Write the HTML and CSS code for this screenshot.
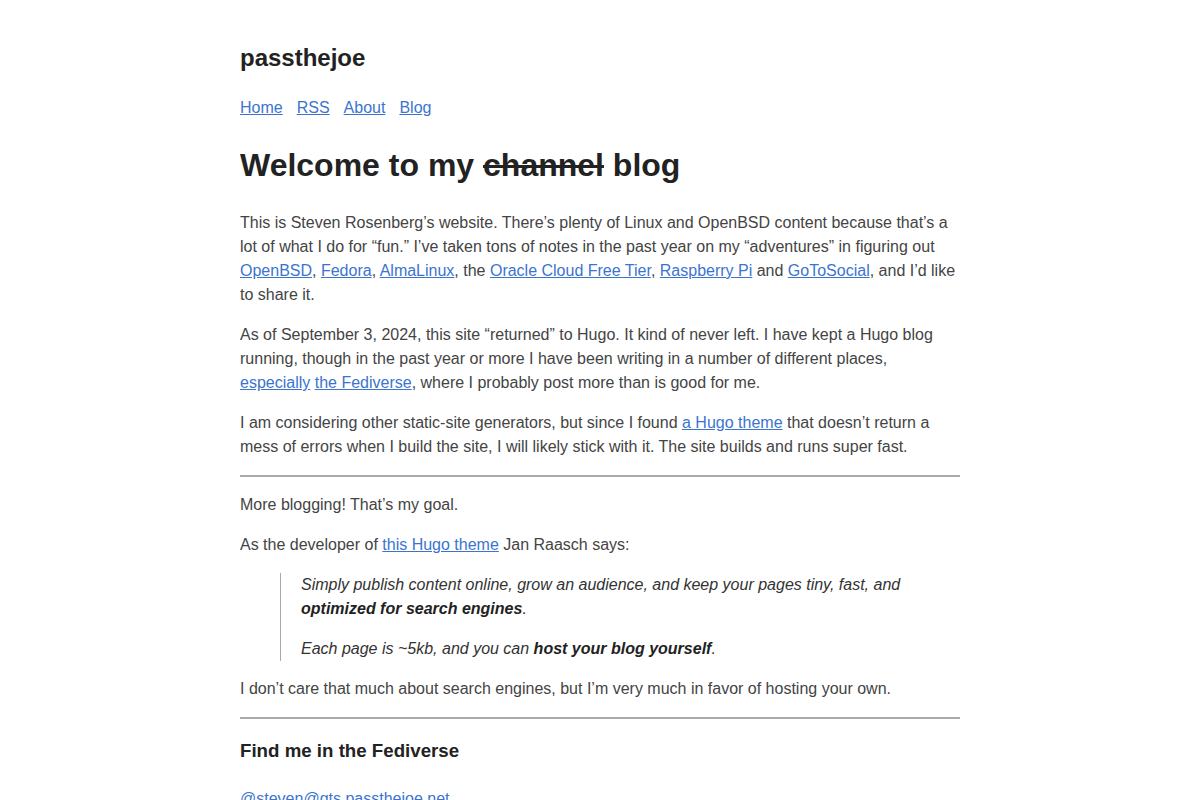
FILE: index.html
```html
<!DOCTYPE html>
<html lang="en">
<head>
<meta charset="utf-8">
<title>passthejoe</title>
<link rel="stylesheet" href="styles.css">
</head>
<body>
<header class="site-header">
  <div class="site-title">passthejoe</div>
  <nav class="site-nav">
    <a href="#">Home</a>
    <a href="#">RSS</a>
    <a href="#">About</a>
    <a href="#">Blog</a>
  </nav>
</header>
<main class="content">
  <h1 class="page-title">Welcome to my <s>channel</s> blog</h1>
  <p>This is Steven Rosenberg’s website. There’s plenty of Linux and OpenBSD content because that’s a lot of what I do for “fun.” I’ve taken tons of notes in the past year on my “adventures” in figuring out <a href="#">OpenBSD</a>, <a href="#">Fedora</a>, <a href="#">AlmaLinux</a>, the <a href="#">Oracle Cloud Free Tier</a>, <a href="#">Raspberry Pi</a> and <a href="#">GoToSocial</a>, and I’d like to share it.</p>
  <p>As of September 3, 2024, this site “returned” to Hugo. It kind of never left. I have kept a Hugo blog running, though in the past year or more I have been writing in a number of different places, <a href="#">especially</a> <a href="#">the Fediverse</a>, where I probably post more than is good for me.</p>
  <p>I am considering other static-site generators, but since I found <a href="#">a Hugo theme</a> that doesn’t return a mess of errors when I build the site, I will likely stick with it. The site builds and runs super fast.</p>
  <hr>
  <p>More blogging! That’s my goal.</p>
  <p>As the developer of <a href="#">this Hugo theme</a> Jan Raasch says:</p>
  <blockquote>
    <p>Simply publish content online, grow an audience, and keep your pages tiny, fast, and <strong>optimized for search engines</strong>.</p>
    <p>Each page is ~5kb, and you can <strong>host your blog yourself</strong>.</p>
  </blockquote>
  <p>I don’t care that much about search engines, but I’m very much in favor of hosting your own.</p>
  <hr>
  <h2 class="section-title">Find me in the Fediverse</h2>
  <p><a href="#">@steven@gts.passthejoe.net</a></p>
</main>
</body>
</html>
```
FILE: styles.css
```css
html {
  background: #fff;
}
body {
  margin: 0 auto;
  padding: 40px 0 40px;
  max-width: 720px;
  font-family: "Liberation Sans", Arial, sans-serif;
  font-size: 16px;
  line-height: 24px;
  color: #444;
}
a {
  color: #3b74d0;
}
.site-header {
  display: flex;
  flex-direction: column;
}
.site-title {
  font-size: 24px;
  line-height: 36px;
  font-weight: bold;
  color: #222;
}
.site-nav {
  display: flex;
  gap: 14px;
  margin-top: 20px;
}
.page-title {
  font-size: 32px;
  line-height: 48px;
  font-weight: bold;
  color: #222;
  margin: 21px 0 22px;
}
p {
  margin: 16px 0;
}
.content > p:first-of-type {
  margin-top: 0;
}
hr {
  border: 0;
  border-top: 2px solid #aaa;
  margin: 16px 0 15px;
}
blockquote {
  margin: 0 0 0 40px;
  padding-left: 20px;
  border-left: 1px solid #aaa;
  font-style: italic;
  color: #333;
}
blockquote strong {
  color: #222;
}
.section-title {
  font-size: 18.7px;
  line-height: 28px;
  font-weight: bold;
  color: #222;
  margin: 18px 0 22px;
}
```
